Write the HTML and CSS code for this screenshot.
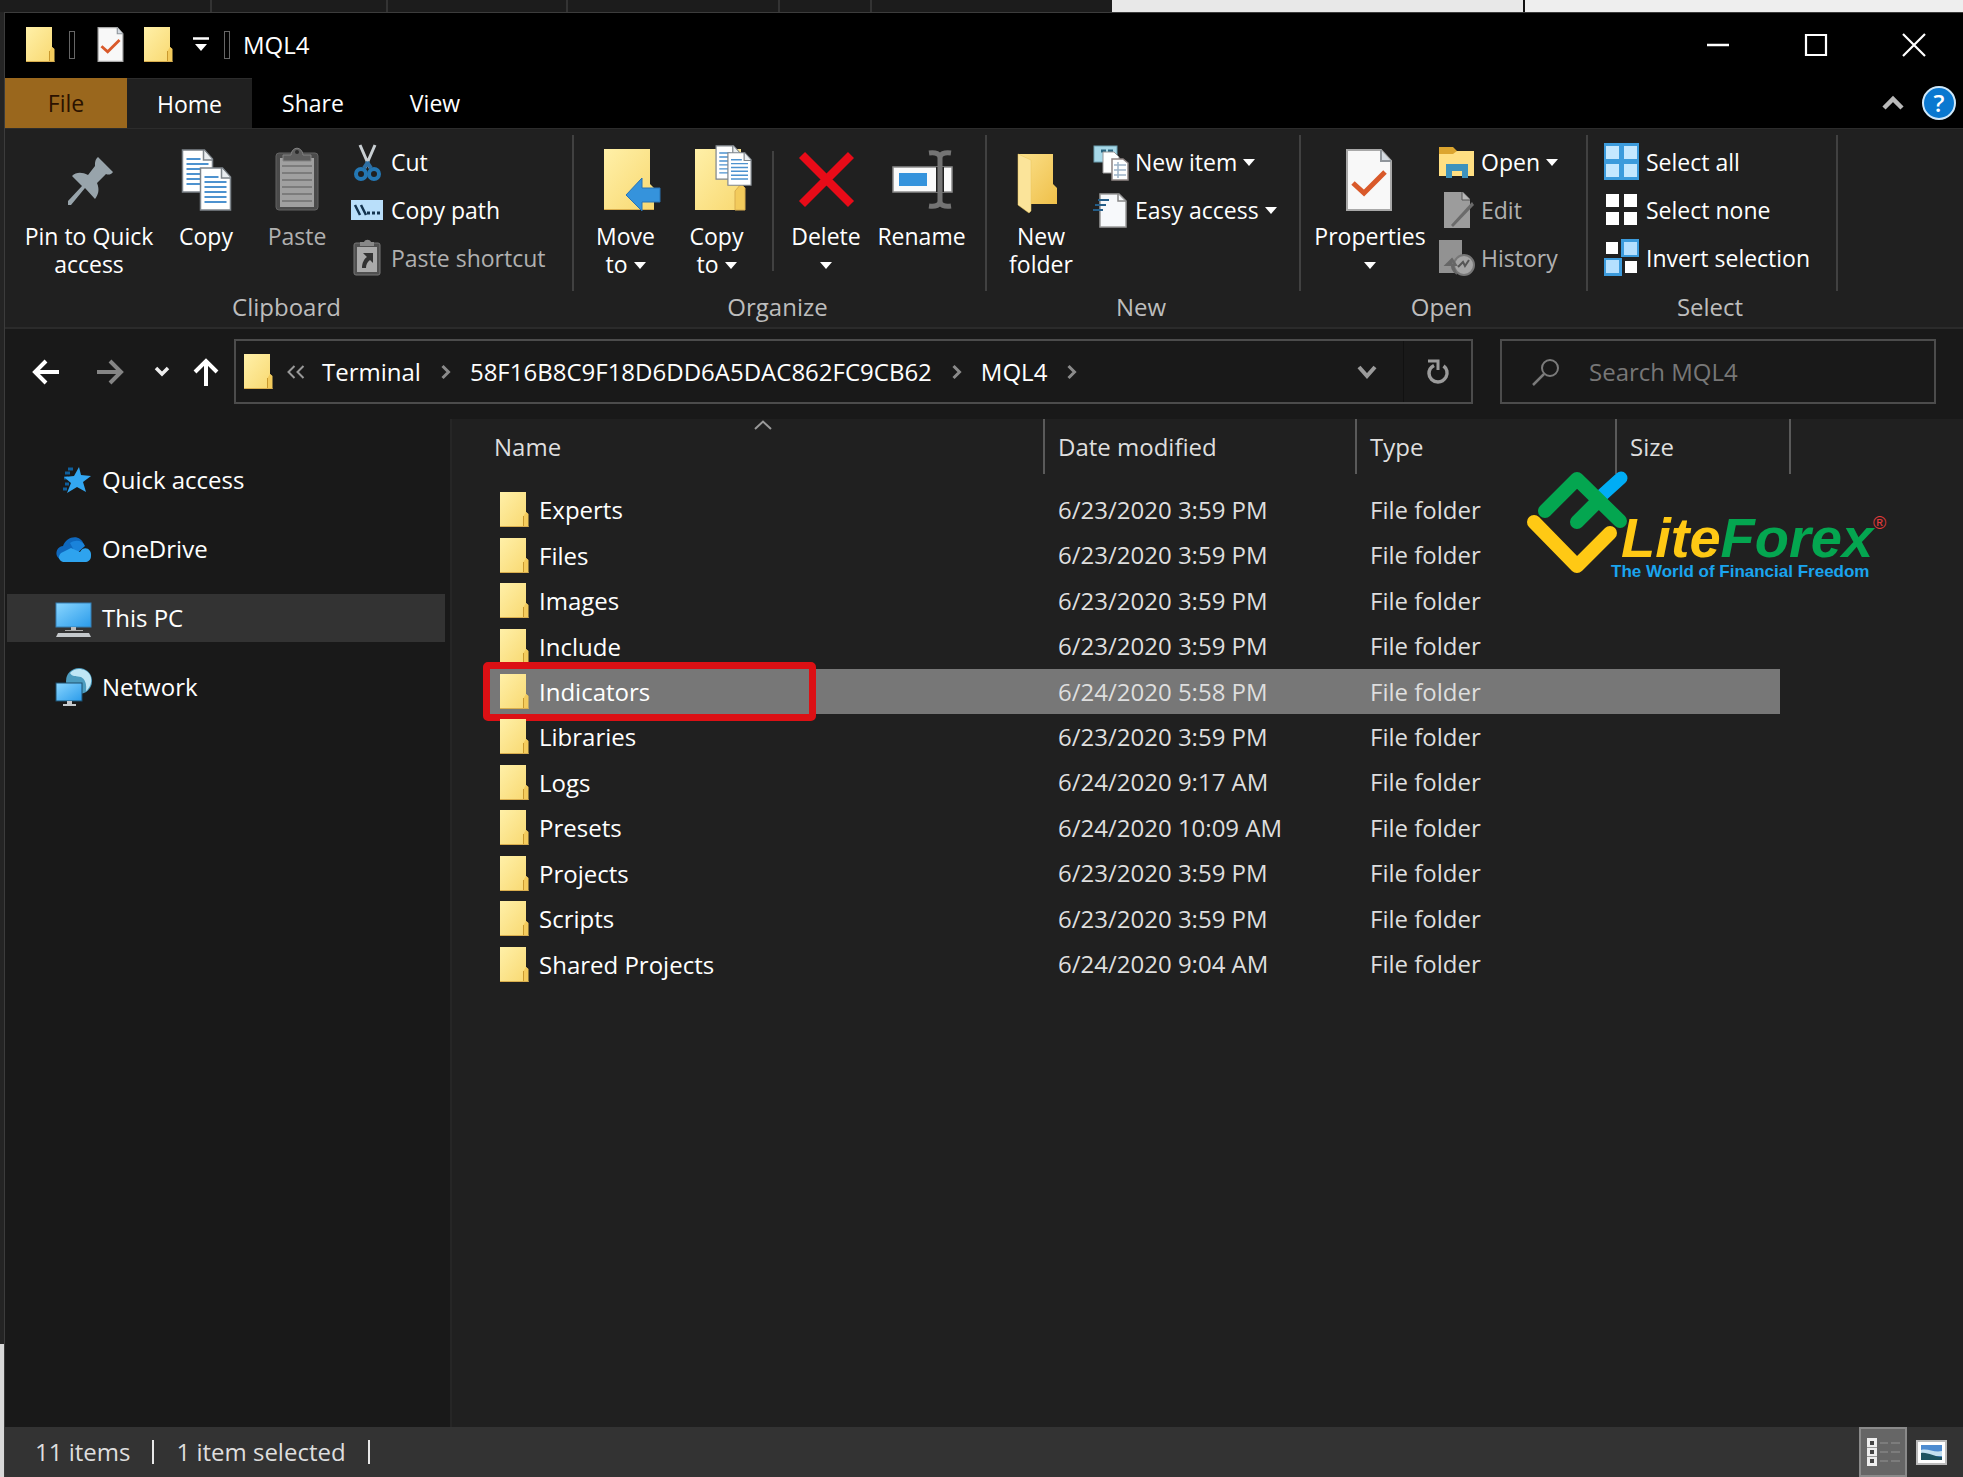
FILE: index.html
```
<!DOCTYPE html>
<html lang="en">
<head>
<meta charset="utf-8">
<title>MQL4</title>
<link rel="stylesheet" href="styles.css">
</head>
<body>
<svg class="defs" width="0" height="0" aria-hidden="true">
  <defs>
    <linearGradient id="g-folder" x1="0" y1="0" x2="1" y2="1"><stop offset="0" stop-color="#fff0a8"/><stop offset="1" stop-color="#f8d870"/></linearGradient>
    <linearGradient id="g-screen" x1="0" y1="0" x2="1" y2="1"><stop offset="0" stop-color="#8ad6ff"/><stop offset="1" stop-color="#2a9bea"/></linearGradient>
    <linearGradient id="g-open" x1="0" y1="0" x2="1" y2="1"><stop offset="0" stop-color="#fbe08a"/><stop offset="1" stop-color="#efc04a"/></linearGradient>
    <symbol id="folder" viewBox="0 0 29 35">
      <path d="M0 0H26V20L28 22V35H0Z" fill="url(#g-folder)"/>
      <path d="M23.500 34V24L26 20L28.500 22V35H23.500Z" fill="#f3cb5c"/>
      <path d="M23.500 24V34" stroke="#c9992e"/>
      <path d="M0 34.500H28.500" stroke="#d9ae4e"/>
    </symbol>
    <symbol id="check-doc" viewBox="0 0 46 62">
      <path d="M1 1H35L45 12V61H1Z" fill="#f8f8f8" stroke="#a8a8a8" stroke-width="2"/>
      <path d="M35 1V12H45" fill="#d5dbe2" stroke="#8f959b" stroke-width="2"/>
      <path d="M7 34L18 44L39 23" fill="none" stroke="#d9592a" stroke-width="5"/>
    </symbol>
    <symbol id="lined-doc" viewBox="0 0 32 44">
      <path d="M1 1H23L31 10V43H1Z" fill="#fff" stroke="#7d848a" stroke-width="1.500"/>
      <path d="M22 1V11H31" fill="#e9edf0" stroke="#7d848a" stroke-width="1.500"/>
      <path d="M5 10H19M5 15H27M5 20H27M5 25H27M5 30H27M5 35H27" stroke="#4d92cf" stroke-width="1.800"/>
    </symbol>
  </defs>
</svg>

<div class="backdrop" aria-hidden="true"><span></span><span></span><span></span><span></span><span></span><i></i><b></b></div>

<div class="window">
  <header class="titlebar">
    <div class="quick">
      <svg class="fold" aria-hidden="true"><use href="#folder"/></svg>
      <span class="grip"></span>
      <button class="plain" aria-label="Properties"><svg width="27" height="35"><use href="#check-doc"/></svg></button>
      <button class="plain" aria-label="New folder"><svg class="fold"><use href="#folder"/></svg></button>
      <button class="plain" aria-label="Customize"><svg width="16" height="16" viewBox="0 0 16 16"><path d="M0 1.500H16" stroke="#fff" stroke-width="2.500"/><path d="M2 7H14L8 14Z" fill="#fff"/></svg></button>
      <span class="grip"></span>
    </div>
    <h1>MQL4</h1>
    <div class="controls">
      <button class="plain" aria-label="Minimize"><svg width="24" height="24" viewBox="0 0 24 24"><path d="M1 12H23" stroke="#fff" stroke-width="2.500"/></svg></button>
      <button class="plain" aria-label="Maximize"><svg width="24" height="24" viewBox="0 0 24 24"><path d="M2 2H22V22H2Z" fill="none" stroke="#fff" stroke-width="2.200"/></svg></button>
      <button class="plain" aria-label="Close"><svg width="24" height="24" viewBox="0 0 24 24"><path d="M1 1L23 23M23 1L1 23" stroke="#fff" stroke-width="2.200"/></svg></button>
    </div>
  </header>

  <div class="tabs">
    <button class="tab file">File</button>
    <button class="tab active">Home</button>
    <button class="tab">Share</button>
    <button class="tab">View</button>
    <div class="tab-end">
      <button class="plain" aria-label="Collapse ribbon"><svg width="22" height="16" viewBox="0 0 22 16"><path d="M2 13L11 4L20 13" fill="none" stroke="#b9b9b9" stroke-width="4.500"/></svg></button>
      <button class="help" aria-label="Help">?</button>
    </div>
  </div>

  <div class="ribbon">
    <section class="group clipboard">
      <div class="tools">
        <button class="big pin"><svg viewBox="0 0 64 64"><g transform="translate(11 10)"><path d="M30 0L45 15C43 18 40 18 38 17L29 26C32 33 30 38 27 42L17 31L3 48L0 48V44L14 29L4 19C8 15 14 15 20 18L27 9C27 5 27 3 30 0Z" fill="#98a4ab"/></g></svg><span>Pin to Quick access</span></button>
        <button class="big copy"><svg viewBox="0 0 64 64"><use href="#lined-doc" x="7" y="2" width="33" height="44"/><use href="#lined-doc" x="25" y="20" width="33" height="44"/></svg><span>Copy</span></button>
        <button class="big paste" disabled><svg viewBox="0 0 64 64"><rect x="11" y="6" width="42" height="57" rx="3" fill="#4b4b4b" stroke="#636363"/><rect x="15" y="11" width="34" height="49" fill="#a0a0a0"/><path d="M17 19H47M17 26H47M17 33H47M17 40H47M17 47H47M17 54H47" stroke="#707070" stroke-width="1.500"/><path d="M18 14V8H26C27 -1 37 -1 38 8H46V14Z" fill="#5e5e5e" stroke="#848484"/><circle cx="32" cy="5" r="2" fill="#2a2a2a"/></svg><span>Paste</span></button>
        <div class="small">
          <button><svg viewBox="0 0 36 40"><path d="M11 3L21 26M26 3L16 26" stroke="#c9cfd3" stroke-width="3"/><path d="M18 20L22 26M19 20L15 26" stroke="#2c6fa5" stroke-width="4"/><ellipse cx="12" cy="32" rx="5" ry="5" fill="none" stroke="#2477b3" stroke-width="4"/><ellipse cx="25" cy="32" rx="5" ry="5" fill="none" stroke="#2477b3" stroke-width="4"/></svg>Cut</button>
          <button><svg viewBox="0 0 36 40"><rect x="2" y="10" width="32" height="20" fill="#b9dffa"/><path d="M6 15L11 25M12 15L17 25" stroke="#14344f" stroke-width="2.500"/><path d="M18 23H21M23 23H26M28 23H31" stroke="#14344f" stroke-width="3"/></svg>Copy path</button>
          <button disabled><svg viewBox="0 0 36 40"><rect x="5" y="5" width="26" height="32" rx="2" fill="#505050" stroke="#767676"/><rect x="8" y="9" width="20" height="25" fill="#aaa"/><path d="M11 8V4H15C16 1 21 1 22 4H25V8Z" fill="#888"/><path d="M14 15H24V25L21 22C18 24 17 27 17 30H13C13 25 15 21 18 19Z" fill="#333"/></svg>Paste shortcut</button>
        </div>
      </div>
      <h2>Clipboard</h2>
    </section>

    <section class="group organize">
      <div class="tools">
        <button class="big move"><svg viewBox="0 0 64 64"><path d="M10 2H56V37L60 41V63H10Z" fill="url(#g-folder)"/><path d="M10 62.500H60" stroke="#d9ae4e"/><path d="M32 48L48 31V41H66V55H48V64Z" fill="#3593dc" stroke="#2873b4"/></svg><span>Move<br>to <i class="caret"></i></span></button>
        <button class="big move"><svg viewBox="0 0 64 64"><path d="M10 2H56V37L60 41V63H10Z" fill="url(#g-folder)"/><path d="M50 63V44L56 37L60 41V63Z" fill="#f3cb5c" stroke="#d9ae4e"/><use href="#lined-doc" x="30" y="-2" width="26" height="35"/><use href="#lined-doc" x="42" y="5" width="25" height="34"/></svg><span>Copy<br>to <i class="caret"></i></span></button>
        <span class="divider"></span>
        <button class="big delete"><svg viewBox="0 0 64 64"><path d="M8 8L57 57M57 8L8 57" stroke="#e80b18" stroke-width="8.500"/></svg><span>Delete<br><i class="caret"></i></span></button>
        <button class="big rename"><svg viewBox="0 0 64 64"><rect x="3" y="20" width="59" height="25" fill="#fafafa" stroke="#8a8a8a" stroke-width="1.500"/><rect x="9" y="26" width="28" height="13" fill="#3593dc"/><path d="M46 20H54V45H46Z" fill="#202020"/><path d="M39 6C46 5 50 7 50 11C50 7 54 5 61 6M50 10V56M39 59C46 60 50 58 50 54C50 58 54 60 61 59" fill="none" stroke="#747474" stroke-width="5"/></svg><span>Rename</span></button>
      </div>
      <h2>Organize</h2>
    </section>

    <section class="group new">
      <div class="tools">
        <button class="big folder-new"><svg viewBox="0 0 64 64"><path d="M9 7H44V37L48 41V57H9Z" fill="url(#g-open)"/><path d="M9 7L22 13V64L20 66L9 58Z" fill="#fbe49a" stroke="#eac65d" stroke-width=".5"/></svg><span>New folder</span></button>
        <div class="small">
          <button><svg viewBox="0 0 36 40"><rect x="1" y="4" width="23" height="16" fill="#a6d8e8" stroke="#6c9fb0"/><path d="M8 9H13M15 9H20" stroke="#2d6680" stroke-width="3"/><path d="M10 10H21L26 15V31H10Z" fill="#fff" stroke="#9a9a9a"/><path d="M19 17H30L35 21V38H19Z" fill="#fff" stroke="#8f8584" stroke-width="1.500"/><path d="M21 23H33M21 28H33M21 33H33M25 20V36" stroke="#9db3c7" stroke-width="1.500"/></svg>New item <i class="caret"></i></button>
          <button><svg viewBox="0 0 36 40"><path d="M7 4H26L33 11V37H7Z" fill="#f7f9fb" stroke="#9b9b9b" stroke-width="1.500"/><path d="M25 4V11H33" fill="none" stroke="#888" stroke-width="1.500"/><path d="M5 10H16M2 15H13M0 20H10" stroke="#245d88" stroke-width="2.200"/></svg>Easy access <i class="caret"></i></button>
        </div>
      </div>
      <h2>New</h2>
    </section>

    <section class="group open">
      <div class="tools">
        <button class="big properties"><svg viewBox="0 0 64 64"><use href="#check-doc" x="8" y="2" width="46" height="62"/></svg><span>Properties<br><i class="caret"></i></span></button>
        <div class="small">
          <button><svg viewBox="0 0 36 40"><path d="M0 5H14L18 9H35V34H0Z" fill="#dca52f"/><path d="M0 12H14L18 9H35V34H0Z" fill="#ffdf82"/><path d="M7 36V22H29V36H23V29H13V36Z" fill="#3d92bd"/></svg>Open <i class="caret"></i></button>
          <button disabled><svg viewBox="0 0 36 40"><path d="M5 2H24L31 9V38H5Z" fill="#9c9c9c"/><path d="M23 2V10H31" fill="#b8b8b8" stroke="#555"/><path d="M12 35L33 12L35 15L14 37Z" fill="#6a6a6a"/></svg>Edit</button>
          <button disabled><svg viewBox="0 0 36 40"><path d="M0 2H23V35H0Z" fill="#929292"/><circle cx="25" cy="27" r="10" fill="#a5a5a5" stroke="#777" stroke-width="2"/><path d="M19 29L24 24L26 28L30 22" fill="none" stroke="#555" stroke-width="2"/><path d="M13 22C12 28 13 33 18 36M7 27L13 21L17 27Z" fill="#666" stroke="#666" stroke-width="2"/></svg>History</button>
        </div>
      </div>
      <h2>Open</h2>
    </section>

    <section class="group select">
      <div class="tools">
        <div class="small">
          <button><svg viewBox="0 0 36 40"><rect x="0" y="1" width="35" height="37" fill="#3c9bdc"/><path d="M2 4H15V17H2ZM20 4H33V17H20ZM2 22H15V35H2ZM20 22H33V35H20Z" fill="#c5e8ff"/></svg>Select all</button>
          <button><svg viewBox="0 0 36 40"><path d="M2 4H15V17H2ZM20 4H33V17H20ZM2 22H15V35H2ZM20 22H33V35H20Z" fill="#fff"/></svg>Select none</button>
          <button><svg viewBox="0 0 36 40"><path d="M17 1H35V19H17ZM0 20H18V38H0Z" fill="#3c9bdc"/><path d="M20 4H33V17H20ZM2 22H15V35H2Z" fill="#b5e0ff"/><path d="M2 4H14V16H2ZM21 23H33V35H21Z" fill="#fff"/></svg>Invert selection</button>
        </div>
      </div>
      <h2>Select</h2>
    </section>
  </div>

  <div class="navbar">
    <button class="plain nav-btn" aria-label="Back"><svg width="28" height="28" viewBox="0 0 28 28"><path d="M27 14H3M14 3L3 14L14 25" fill="none" stroke="#fff" stroke-width="4"/></svg></button>
    <button class="plain nav-btn" aria-label="Forward"><svg width="28" height="28" viewBox="0 0 28 28"><path d="M1 14H25M14 3L25 14L14 25" fill="none" stroke="#858585" stroke-width="4"/></svg></button>
    <button class="plain recent" aria-label="Recent locations"><svg width="16" height="12" viewBox="0 0 16 12"><path d="M2 2L8 8L14 2" fill="none" stroke="#eee" stroke-width="3.500"/></svg></button>
    <button class="plain up" aria-label="Up"><svg width="28" height="28" viewBox="0 0 28 28"><path d="M14 28V3M3 14L14 3L25 14" fill="none" stroke="#fff" stroke-width="4"/></svg></button>
    <nav class="address" aria-label="Address">
      <svg class="fold" aria-hidden="true"><use href="#folder"/></svg>
      <svg class="sep" viewBox="0 0 48 24"><path d="M21 6L15 12L21 18M30 6L24 12L30 18" fill="none" stroke="#999" stroke-width="2"/></svg>
      <a href="#">Terminal</a>
      <svg class="sep" viewBox="0 0 48 24"><path d="M21 6L27 12L21 18" fill="none" stroke="#8a8a8a" stroke-width="3"/></svg>
      <a href="#">58F16B8C9F18D6DD6A5DAC862FC9CB62</a>
      <svg class="sep" viewBox="0 0 48 24"><path d="M21 6L27 12L21 18" fill="none" stroke="#8a8a8a" stroke-width="3"/></svg>
      <a href="#">MQL4</a>
      <svg class="sep" viewBox="0 0 48 24"><path d="M21 6L27 12L21 18" fill="none" stroke="#8a8a8a" stroke-width="3"/></svg>
      <button class="plain history" aria-label="Previous locations"><svg width="20" height="16" viewBox="0 0 20 16"><path d="M2 3L10 12L18 3" fill="none" stroke="#9b9b9b" stroke-width="4"/></svg></button>
      <button class="plain refresh" aria-label="Refresh"><svg width="24" height="26" viewBox="0 0 24 26"><path d="M17.500 7C21 9.500 22 14 20 18C18 21.500 15 23 12 23C7 23 3 19 3 14.500C3 11 5 8 8 6.500" fill="none" stroke="#9b9b9b" stroke-width="3.500"/><path d="M2 2H12V11" fill="none" stroke="#9b9b9b" stroke-width="3"/></svg></button>
    </nav>
    <label class="search">
      <svg width="28" height="28" viewBox="0 0 28 28"><circle cx="18" cy="10" r="8" fill="none" stroke="#7b7b7b" stroke-width="2"/><path d="M12 16L1 27" stroke="#7b7b7b" stroke-width="2.500"/></svg>
      <input type="text" placeholder="Search MQL4" aria-label="Search MQL4">
    </label>
  </div>

  <div class="main">
    <aside class="sidebar">
      <a href="#"><svg viewBox="0 0 36 38"><path d="M14 12H9M12 17H8M13 23H9M17 8H12M11 28H7" stroke="#0f5f9c" stroke-width="3"/><path d="M23 6L25 14L35 15L27 21L30 31L21 26L11 32L15 22L8 16L18 15Z" fill="#33a7f2"/></svg>Quick access</a>
      <a href="#"><svg viewBox="0 0 36 38"><path d="M6 30C-2 28-1 17 7 16C11 5 25 4 28 15L16 30Z" fill="#0f68bd"/><path d="M14 13C20 9 27 11 29 16L20 24Z" fill="#1a83da"/><path d="M7 32C2 30 2 26 5 23L15 18L24 22C28 15 36 19 35 26C35 30 32 32 29 32Z" fill="#2ea3ee"/></svg>OneDrive</a>
      <a href="#" class="current"><svg viewBox="0 0 36 38"><rect x="0" y="4" width="35" height="24" fill="url(#g-screen)" stroke="#3680b5"/><path d="M15 28H20V31H15Z" fill="#bbb"/><path d="M2 34H33L35 38H0Z" fill="#c5c9cc"/><path d="M9 31.500H27" stroke="#aaa"/></svg>This PC</a>
      <a href="#"><svg viewBox="0 0 36 38"><circle cx="23" cy="13" r="13" fill="#4c9cbf"/><path d="M14 5C19-1 30 0 34 7C37 13 34 20 30 23C31 16 29 11 25 9C21 8 16 9 14 5Z" fill="#bfe6f5"/><rect x="0" y="15" width="26" height="18" fill="url(#g-screen)" stroke="#1c4e6d"/><path d="M11 33H16V36H20V38H7V36H11Z" fill="#c5c9cc"/></svg>Network</a>
    </aside>

    <main class="content">
      <table>
        <thead><tr>
          <th class="c-name"><span>Name</span><svg class="sort" width="18" height="11" viewBox="0 0 18 11"><path d="M1 9L9 1.500L17 9" fill="none" stroke="#999" stroke-width="2"/></svg></th>
          <th class="c-date"><span>Date modified</span></th><th class="c-type"><span>Type</span></th><th class="c-size"><span>Size</span></th>
        </tr></thead>
        <tbody>
          <tr><td><svg class="fold"><use href="#folder"/></svg>Experts</td><td>6/23/2020 3:59 PM</td><td>File folder</td><td></td></tr>
          <tr><td><svg class="fold"><use href="#folder"/></svg>Files</td><td>6/23/2020 3:59 PM</td><td>File folder</td><td></td></tr>
          <tr><td><svg class="fold"><use href="#folder"/></svg>Images</td><td>6/23/2020 3:59 PM</td><td>File folder</td><td></td></tr>
          <tr><td><svg class="fold"><use href="#folder"/></svg>Include</td><td>6/23/2020 3:59 PM</td><td>File folder</td><td></td></tr>
          <tr class="selected"><td><svg class="fold"><use href="#folder"/></svg>Indicators<span class="highlight"></span></td><td>6/24/2020 5:58 PM</td><td>File folder</td><td></td></tr>
          <tr><td><svg class="fold"><use href="#folder"/></svg>Libraries</td><td>6/23/2020 3:59 PM</td><td>File folder</td><td></td></tr>
          <tr><td><svg class="fold"><use href="#folder"/></svg>Logs</td><td>6/24/2020 9:17 AM</td><td>File folder</td><td></td></tr>
          <tr><td><svg class="fold"><use href="#folder"/></svg>Presets</td><td>6/24/2020 10:09 AM</td><td>File folder</td><td></td></tr>
          <tr><td><svg class="fold"><use href="#folder"/></svg>Projects</td><td>6/23/2020 3:59 PM</td><td>File folder</td><td></td></tr>
          <tr><td><svg class="fold"><use href="#folder"/></svg>Scripts</td><td>6/23/2020 3:59 PM</td><td>File folder</td><td></td></tr>
          <tr><td><svg class="fold"><use href="#folder"/></svg>Shared Projects</td><td>6/24/2020 9:04 AM</td><td>File folder</td><td></td></tr>
        </tbody>
      </table>
      <div class="brand">
        <svg width="104" height="106" viewBox="0 0 104 106" fill="none" stroke-linecap="round" stroke-linejoin="round">
          <path d="M74 27L95 8" stroke="#00adf5" stroke-width="13"/>
          <path d="M8 52L51 96L84 63" stroke="#ffc914" stroke-width="14"/>
          <path d="M19 41L51 9L94 51M51 52L72 31" stroke="#04a650" stroke-width="14"/>
        </svg>
        <div class="brand-text">
          <strong><span class="lite">Lite</span><span class="forex">Forex</span><sup>®</sup></strong>
          <small>The World of Financial Freedom</small>
        </div>
      </div>
    </main>
  </div>

  <footer class="status">
    <span>11 items</span><i class="bar"></i><span>1 item selected</span><i class="bar"></i>
    <div class="views">
      <button class="plain on" aria-label="Details view"><svg width="34" height="28" viewBox="0 0 34 28"><path d="M1 0H11V28H1Z" fill="#eee"/><path d="M4 3H8V7H4ZM4 12H8V16H4ZM4 21H8V25H4Z" fill="#444"/><path d="M1 9.500H11M1 18.500H11" stroke="#999"/><path d="M14 5H22M25 5H34M14 14H22M25 14H34M14 23H22M25 23H34" stroke="#7c7c7c" stroke-width="2"/></svg></button>
      <button class="plain" aria-label="Thumbnail view"><svg width="31" height="25" viewBox="0 0 31 25"><path d="M1 1H30V24H1Z" fill="#fff" stroke="#bbb" stroke-width="2"/><path d="M5 5H26V20H5Z" fill="#4d8bd0"/><path d="M5 10C12 8 18 13 26 11V16H5Z" fill="#c4e0f0"/><path d="M5 13C12 12 18 17 26 17V20H5Z" fill="#1e5360"/></svg></button>
    </div>
  </footer>
</div>
</body>
</html>
```
FILE: styles.css
```
* { box-sizing: border-box; }

body {
  margin: 0;
  min-height: 100vh;
  display: flex;
  flex-direction: column;
  padding-left: 4px;
  background: linear-gradient(to bottom, #242424 91%, #d8d8d8 91%);
  color: #fff;
  font: 24px/32px "Open Sans", "Noto Sans", sans-serif;
}

h1, h2 { margin: 0; font-weight: 400; font-size: 24px; }
a { color: inherit; text-decoration: none; }
button { font: inherit; color: inherit; background: none; border: 0; padding: 0; }
svg { display: block; flex: none; overflow: visible; }
.defs { position: absolute; }
.plain { display: flex; align-items: center; justify-content: center; }
.fold { width: 29px; height: 35px; }

/* windows behind this one */
.backdrop {
  display: grid;
  grid-template-columns: 212px 176px 180px 212px 92px 1fr 438px;
  height: 12px;
  margin-left: -4px;
  background: #1c1c1c;
}
.backdrop span { border-right: 2px solid #333; }
.backdrop i { margin-left: 240px; background: #e8e8e8; border-right: 2px solid #111; }
.backdrop b { background: #eee; }

.window {
  flex: 1;
  display: flex;
  flex-direction: column;
  border-left: 1px solid #3c3c3c;
  border-top: 1px solid #3c3c3c;
  background: #191919;
}

.titlebar { display: flex; align-items: center; height: 65px; background: #000; padding: 0 0 2px 21px; }
.quick { display: flex; align-items: center; }
.grip { width: 6px; height: 28px; border: 1px solid #666; margin: 0 14px; }
.quick .plain { margin: 0 12px 0 8px; }
.quick .plain + .grip { margin: 0 13px 0 3px; }
.controls { display: flex; margin-left: auto; align-self: stretch; }
.controls button { width: 98px; }

.tabs { display: flex; height: 50px; background: #000; font-size: 23px; }
.tab { width: 122px; }
.tab.file { background: #9a671d; color: #2b1200; }
.tab.active { width: 125px; background: #202020; border-top: 1px solid #2c2c2c; }
.tab-end { display: flex; align-items: center; gap: 18px; margin-left: auto; padding-right: 7px; }
.help {
  width: 34px;
  height: 34px;
  border: 2px solid #cfe8fa;
  border-radius: 50%;
  background: #0a78d0;
  font-size: 24px;
  line-height: 28px;
  font-weight: 600;
}

.ribbon {
  display: flex;
  background: #202020;
  border-top: 1px solid #2c2c2c;
  border-bottom: 2px solid #2b2b2b;
  font-size: 23px;
  line-height: 28px;
}
.group { position: relative; height: 198px; }
.group::after {
  content: "";
  position: absolute;
  right: 0;
  top: 6px;
  height: 156px;
  border-right: 2px solid #414141;
}
.group h2 { padding-right: 6px; text-align: center; color: #bdbdbd; line-height: 28px; }
.tools { display: flex; height: 164px; }
.big { display: flex; flex-direction: column; align-items: center; gap: 11px; padding-top: 18px; }
.big svg { width: 64px; height: 64px; }
.big span { height: 56px; }
button:disabled { color: #b0b0b0; }
.small { padding-top: 9px; }
.small button { display: flex; align-items: center; gap: 6px; height: 48px; white-space: nowrap; }
.small svg { width: 36px; height: 40px; }
.caret {
  display: inline-block;
  border: 6px solid transparent;
  border-top: 7px solid #fff;
  border-bottom: 0;
  vertical-align: 4px;
}
.clipboard { flex: 0 0 569px; }
.clipboard .tools { padding-left: 12px; }
.clipboard .small { margin-left: 6px; }
.pin { width: 144px; }
.copy { width: 90px; }
.paste { width: 92px; }
.organize { flex: 0 0 413px; }
.organize .tools { padding-left: 6px; }
.move { width: 91px; }
.divider { width: 2px; height: 120px; margin: 22px 8px 0 10px; background: #414141; }
.delete { width: 88px; }
.rename { width: 103px; }
.new { flex: 0 0 314px; }
.new .tools { padding-left: 14px; gap: 12px; }
.folder-new { width: 80px; }
.open { flex: 0 0 287px; }
.open .tools { padding-left: 10px; gap: 10px; }
.properties { width: 118px; }
.select { flex: 0 0 250px; }
.select .tools { padding-left: 16px; }

.navbar { display: flex; padding: 10px 27px 15px 9px; height: 90px; }
.nav-btn { width: 64px; }
.recent { width: 40px; }
.up { width: 48px; }
.address {
  flex: 1;
  display: flex;
  align-items: center;
  margin: 0 27px 0 4px;
  padding-left: 8px;
  border: 2px solid #4c4c4c;
}
.sep { width: 49px; height: 24px; }
.history { width: 60px; margin: 0 6px 0 auto; }
.refresh { width: 68px; border-left: 1px solid #111; align-self: stretch; }
.search { display: flex; align-items: center; gap: 29px; flex: 0 0 436px; padding-left: 30px; border: 2px solid #4c4c4c; }
.search input { flex: 1; min-width: 0; border: 0; padding: 0; background: none; color: #fff; font: inherit; }
.search input::placeholder { color: #777; opacity: 1; }

.main { flex: 1; display: flex; }
.sidebar {
  flex: 0 0 447px;
  display: flex;
  flex-direction: column;
  gap: 21px;
  padding: 37px 5px 0 2px;
  border-right: 2px solid #262626;
}
.sidebar a { display: flex; align-items: center; gap: 10px; height: 48px; padding-left: 49px; }
.sidebar svg { width: 36px; height: 38px; }
.sidebar .current { background: #333; }

.content { position: relative; flex: 1; padding-left: 36px; background: #202020; }
table { width: 1292px; height: 568px; border-collapse: collapse; table-layout: fixed; }
th, td { padding: 0; text-align: left; font-weight: 400; white-space: nowrap; color: #dedede; }
th { position: relative; height: 68px; vertical-align: top; overflow: visible; }
th span { display: block; height: 55px; padding: 12px 0 0 13px; border-right: 2px solid #5a5a5a; }
.c-name { width: 557px; }
.c-name span { padding-left: 6px; }
.c-date { width: 312px; }
.c-type { width: 260px; }
.c-size span { width: 174px; }
.sort { position: absolute; left: 266px; top: 1px; }
td { padding-left: 13px; }
td:first-child { position: relative; padding-left: 12px; line-height: 35px; color: #fff; }
td:first-child .fold { float: left; margin-right: 10px; }
.selected { background: #777; }
.highlight {
  position: absolute;
  left: -5px;
  top: -7px;
  width: 333px;
  height: 59px;
  border: 7px solid #dc1014;
  border-radius: 5px;
}

.brand { position: absolute; left: 1074px; top: 51px; display: flex; font-family: "Liberation Sans", sans-serif; }
.brand-text { margin-left: -19px; padding-top: 43px; white-space: nowrap; }
.brand strong { display: block; padding-left: 10px; font-size: 56px; font-style: italic; line-height: 50px; }
.lite { color: #ffc914; }
.forex { color: #04a650; }
.brand sup { color: #e23b3b; font-size: 18px; font-style: normal; font-weight: 400; line-height: 18px; vertical-align: 28px; }
.brand small { display: block; color: #1aa4ee; font-size: 17px; font-weight: 700; line-height: 18px; }

.status { display: flex; align-items: center; height: 50px; padding-left: 30px; background: #333; color: #dedede; }
.bar { width: 2px; height: 24px; margin: 0 22px; background: #e8e8e8; }
.views { display: flex; align-self: stretch; margin-left: auto; padding-right: 8px; }
.views button { width: 48px; }
.views .on { border: 2px solid #8a8a8a; background: #666; }
```
